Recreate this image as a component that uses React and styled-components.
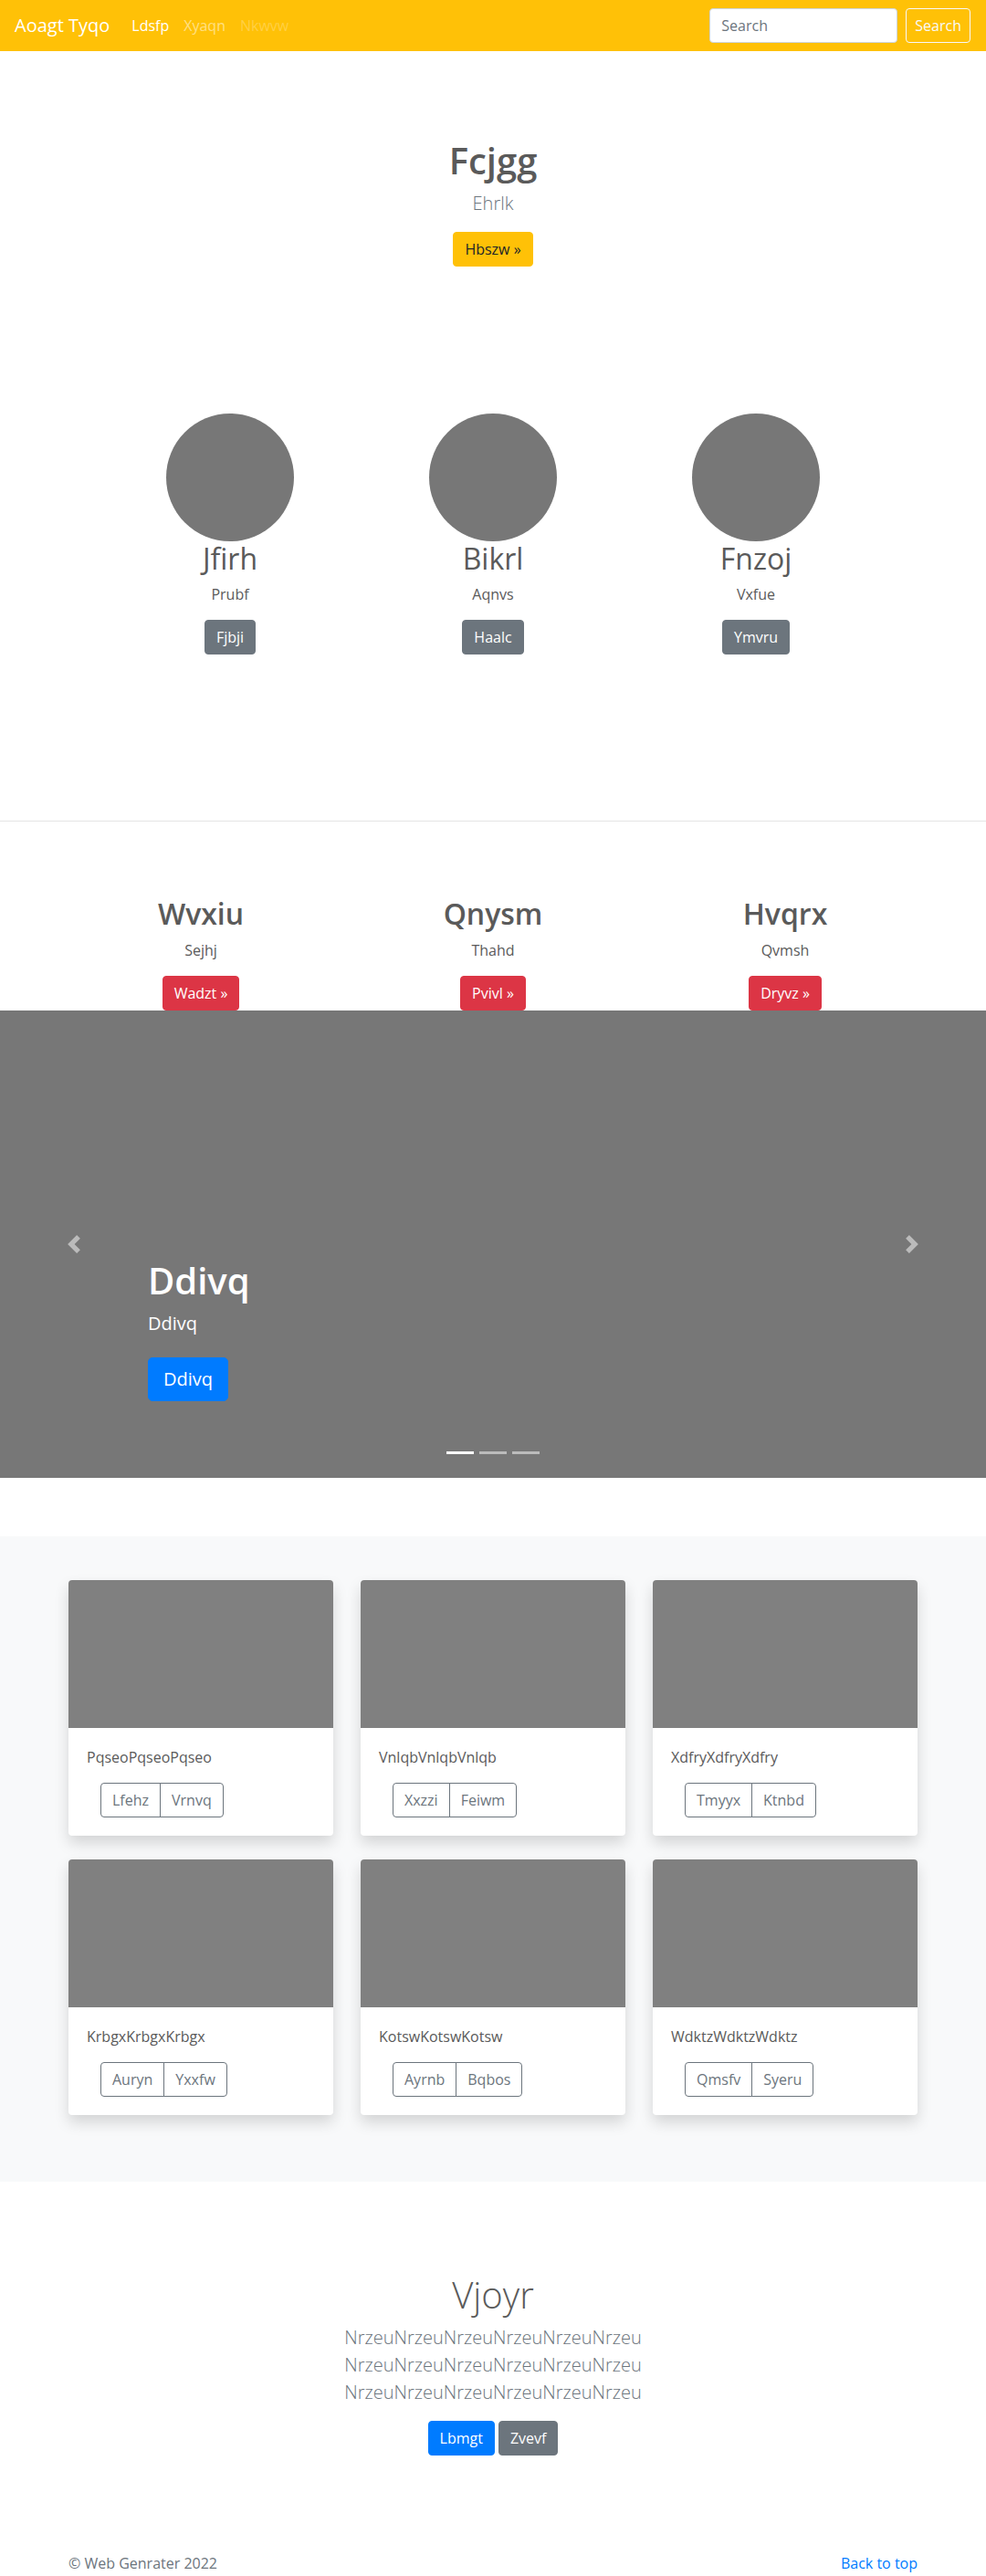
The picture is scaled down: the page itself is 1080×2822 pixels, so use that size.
import React from 'react'
import styled, { createGlobalStyle } from 'styled-components'

// --- global ---

const GlobalStyle = createGlobalStyle`
   * { box-sizing: border-box; }
   body {
      margin: 0;
      font-family: "Open Sans", "Noto Sans", sans-serif;
      font-size: 16px;
      line-height: 1.5;
      color: #5a5a5a;
      background: #fff;
   }
   h1, h2, p { margin: 0; }
`

// --- buttons ---

const variants = {
   warning: { bg: '#ffc107', border: '#ffc107', color: '#212529' },
   secondary: { bg: '#6c757d', border: '#6c757d', color: '#fff' },
   danger: { bg: '#dc3545', border: '#dc3545', color: '#fff' },
   primary: { bg: '#007bff', border: '#007bff', color: '#fff' },
   outlineLight: { bg: 'transparent', border: '#f8f9fa', color: '#f8f9fa' },
   outlineSecondary: { bg: 'transparent', border: '#6c757d', color: '#6c757d' },
}

const Btn = styled.a`
   display: inline-block;
   padding: ${(p) => (p.$lg ? '8px 16px' : '6px 12px')};
   font-family: inherit;
   font-size: ${(p) => (p.$lg ? '20px' : '16px')};
   line-height: 1.5;
   border-radius: ${(p) => (p.$lg ? '5px' : '4px')};
   border: 1px solid ${(p) => variants[p.$variant].border};
   background: ${(p) => variants[p.$variant].bg};
   color: ${(p) => variants[p.$variant].color};
   text-decoration: none;
   white-space: nowrap;
   cursor: pointer;
`

// --- navbar ---

const Nav = styled.nav`
   display: flex;
   align-items: center;
   height: 56px;
   padding: 0 16px;
   background: #ffc107;
`

const Brand = styled.a`
   font-size: 20px;
   line-height: 30px;
   color: #fff;
   margin-right: 16px;
   text-decoration: none;
   white-space: nowrap;
`

const NavList = styled.div`
   display: flex;
   flex: 1;
`

const linkColors = {
   active: '#fff',
   normal: 'rgba(255, 255, 255, 0.5)',
   disabled: 'rgba(255, 255, 255, 0.25)',
}

const NavLink = styled.a`
   display: block;
   padding: 8px;
   color: ${(p) => linkColors[p.$state]};
   text-decoration: none;
`

const SearchForm = styled.form`
   display: flex;
   align-items: center;
   gap: 9px;
   margin-right: 1px;
`

const SearchInput = styled.input`
   width: 206px;
   height: 38px;
   padding: 6px 12px;
   font-family: inherit;
   font-size: 16px;
   color: #495057;
   background: #fff;
   border: 1px solid #ced4da;
   border-radius: 4px;
   outline: none;
   &::placeholder {
      color: #6c757d;
   }
`

const SearchButton = styled(Btn)`
   padding: 6px 9px;
`

// --- hero ---

const Hero = styled.section`
   padding: 96px 15px 0;
   text-align: center;
`

const HeroTitle = styled.h1`
   font-size: 40px;
   font-weight: ${(p) => p.$weight || 600};
   line-height: 1.2;
   margin-bottom: 8px;
`

const Lead = styled.p`
   font-size: 20px;
   font-weight: 300;
   line-height: 1.5;
   color: #6c757d;
   margin-bottom: 16px;
`

const ButtonRow = styled.div`
   margin-bottom: 16px;
`

// --- marketing circles ---

const MarketingGrid = styled.div`
   display: grid;
   grid-template-columns: repeat(3, 1fr);
   max-width: 864px;
   margin: 161px auto 0;
   text-align: center;
`

const MarketingCol = styled.div`
   display: flex;
   flex-direction: column;
   align-items: center;
`

const Circle = styled.div`
   width: 140px;
   height: 140px;
   border-radius: 50%;
   background: #777;
`

const ColTitle = styled.h2`
   font-size: 32px;
   font-weight: ${(p) => p.$weight};
   line-height: 1.2;
   margin-bottom: 8px;
`

const ColText = styled.p`
   margin-bottom: 16px;
`

const Divider = styled.hr`
   margin: 166px 0 82px;
   border: 0;
   border-top: 1px solid rgba(0, 0, 0, 0.1);
`

// --- feature row ---

const FeatureGrid = styled.div`
   display: grid;
   grid-template-columns: repeat(3, 320px);
   justify-content: center;
   text-align: center;
`

const FeatureCol = styled.div`
   padding: 0 15px;
`

// --- carousel ---

const Carousel = styled.div`
   position: relative;
   height: 512px;
   background: #777;
   overflow: hidden;
`

const Caption = styled.div`
   position: absolute;
   left: 15%;
   right: 15%;
   bottom: 84px;
   color: #fff;
   text-align: left;
`

const CaptionText = styled.p`
   font-size: 20px;
   line-height: 1.5;
   margin-bottom: 22px;
`

const Control = styled.a`
   position: absolute;
   top: 0;
   bottom: 0;
   ${(p) => (p.$side === 'prev' ? 'left: 0;' : 'right: 0;')}
   width: 15%;
   display: flex;
   align-items: center;
   justify-content: center;
   opacity: 0.5;
`

const Indicators = styled.div`
   position: absolute;
   left: 0;
   right: 0;
   bottom: 26px;
   display: flex;
   justify-content: center;
   gap: 6px;
`

const Indicator = styled.span`
   width: 30px;
   height: 3px;
   background: ${(p) => (p.$active ? '#fff' : 'rgba(255, 255, 255, 0.5)')};
`

// --- album ---

const Album = styled.section`
   margin-top: 64px;
   padding: 48px 0 73px;
   background: #f8f9fa;
`

const CardGrid = styled.div`
   display: grid;
   grid-template-columns: repeat(3, 290px);
   column-gap: 30px;
   row-gap: 26px;
   justify-content: center;
`

const Card = styled.div`
   background: #fff;
   border-radius: 4px;
   overflow: hidden;
   box-shadow: 0 0.5rem 1rem rgba(0, 0, 0, 0.15);
`

const CardImage = styled.div`
   height: 162px;
   background: #808080;
`

const CardBody = styled.div`
   padding: 20px;
`

const CardText = styled.p`
   margin-bottom: 16px;
`

const BtnGroup = styled.div`
   display: inline-flex;
   margin-left: 15px;
   & > a:first-child {
      border-radius: 4px 0 0 4px;
   }
   & > a:last-child {
      margin-left: -1px;
      border-radius: 0 4px 4px 0;
   }
`

// --- bottom jumbotron ---

const Outro = styled.section`
   padding: 100px 15px 48px;
   text-align: center;
`

const OutroInner = styled.div`
   max-width: 450px;
   margin: 0 auto;
`

const OutroButtons = styled.div`
   display: flex;
   justify-content: center;
   gap: 4px;
   margin: 12px 0 24px;
`

// --- footer ---

const Footer = styled.footer`
   display: flex;
   justify-content: space-between;
   width: 930px;
   margin: 0 auto;
   padding-top: 34px;
   color: #6c757d;
`

const FooterLink = styled.a`
   color: #007bff;
   text-decoration: none;
`

// --- data ---

const circles = [
   { title: 'Jfirh', text: 'Prubf', btn: 'Fjbji' },
   { title: 'Bikrl', text: 'Aqnvs', btn: 'Haalc' },
   { title: 'Fnzoj', text: 'Vxfue', btn: 'Ymvru' },
]

const features = [
   { title: 'Wvxiu', text: 'Sejhj', btn: 'Wadzt »' },
   { title: 'Qnysm', text: 'Thahd', btn: 'Pvivl »' },
   { title: 'Hvqrx', text: 'Qvmsh', btn: 'Dryvz »' },
]

const cards = [
   { text: 'PqseoPqseoPqseo', a: 'Lfehz', b: 'Vrnvq' },
   { text: 'VnlqbVnlqbVnlqb', a: 'Xxzzi', b: 'Feiwm' },
   { text: 'XdfryXdfryXdfry', a: 'Tmyyx', b: 'Ktnbd' },
   { text: 'KrbgxKrbgxKrbgx', a: 'Auryn', b: 'Yxxfw' },
   { text: 'KotswKotswKotsw', a: 'Ayrnb', b: 'Bqbos' },
   { text: 'WdktzWdktzWdktz', a: 'Qmsfv', b: 'Syeru' },
]

const chunk = 'Nrzeu'.repeat(6)

function ChevronIcon({ dir }) {
   return (
      <svg width="20" height="20" viewBox="0 0 8 8" fill="#fff">
         {dir === 'prev' ? (
            <path d="M5.25 0l-4 4 4 4 1.5-1.5L4.25 4l2.5-2.5L5.25 0z" />
         ) : (
            <path d="M2.75 0l-1.5 1.5L3.75 4l-2.5 2.5L2.75 8l4-4-4-4z" />
         )}
      </svg>
   )
}

function App() {
   return (
      <>
         <GlobalStyle />
         <Nav>
            <Brand href="#">Aoagt Tyqo</Brand>
            <NavList>
               <NavLink href="#" $state="active">Ldsfp</NavLink>
               <NavLink href="#" $state="normal">Xyaqn</NavLink>
               <NavLink href="#" $state="disabled">Nkwvw</NavLink>
            </NavList>
            <SearchForm onSubmit={(e) => e.preventDefault()}>
               <SearchInput type="text" placeholder="Search" />
               <SearchButton as="button" $variant="outlineLight">Search</SearchButton>
            </SearchForm>
         </Nav>

         <Hero>
            <HeroTitle>Fcjgg</HeroTitle>
            <Lead>Ehrlk</Lead>
            <ButtonRow>
               <Btn href="#" $variant="warning">Hbszw »</Btn>
            </ButtonRow>
         </Hero>

         <MarketingGrid>
            {circles.map((c) => (
               <MarketingCol key={c.title}>
                  <Circle />
                  <ColTitle $weight={400}>{c.title}</ColTitle>
                  <ColText>{c.text}</ColText>
                  <ButtonRow>
                     <Btn href="#" $variant="secondary">{c.btn}</Btn>
                  </ButtonRow>
               </MarketingCol>
            ))}
         </MarketingGrid>

         <Divider />

         <FeatureGrid>
            {features.map((f) => (
               <FeatureCol key={f.title}>
                  <ColTitle $weight={600}>{f.title}</ColTitle>
                  <ColText>{f.text}</ColText>
                  <Btn href="#" $variant="danger">{f.btn}</Btn>
               </FeatureCol>
            ))}
         </FeatureGrid>

         <Carousel>
            <Caption>
               <HeroTitle>Ddivq</HeroTitle>
               <CaptionText>Ddivq</CaptionText>
               <Btn href="#" $variant="primary" $lg>Ddivq</Btn>
            </Caption>
            <Control href="#" $side="prev"><ChevronIcon dir="prev" /></Control>
            <Control href="#" $side="next"><ChevronIcon dir="next" /></Control>
            <Indicators>
               <Indicator $active />
               <Indicator />
               <Indicator />
            </Indicators>
         </Carousel>

         <Album>
            <CardGrid>
               {cards.map((c) => (
                  <Card key={c.text}>
                     <CardImage />
                     <CardBody>
                        <CardText>{c.text}</CardText>
                        <BtnGroup>
                           <Btn href="#" $variant="outlineSecondary">{c.a}</Btn>
                           <Btn href="#" $variant="outlineSecondary">{c.b}</Btn>
                        </BtnGroup>
                     </CardBody>
                  </Card>
               ))}
            </CardGrid>
         </Album>

         <Outro>
            <OutroInner>
               <HeroTitle $weight={300}>Vjoyr</HeroTitle>
               <Lead>{chunk} {chunk} {chunk}</Lead>
               <OutroButtons>
                  <Btn href="#" $variant="primary">Lbmgt</Btn>
                  <Btn href="#" $variant="secondary">Zvevf</Btn>
               </OutroButtons>
            </OutroInner>
         </Outro>

         <Footer>
            <span>© Web Genrater 2022</span>
            <FooterLink href="#">Back to top</FooterLink>
         </Footer>
      </>
   )
}

export default App
